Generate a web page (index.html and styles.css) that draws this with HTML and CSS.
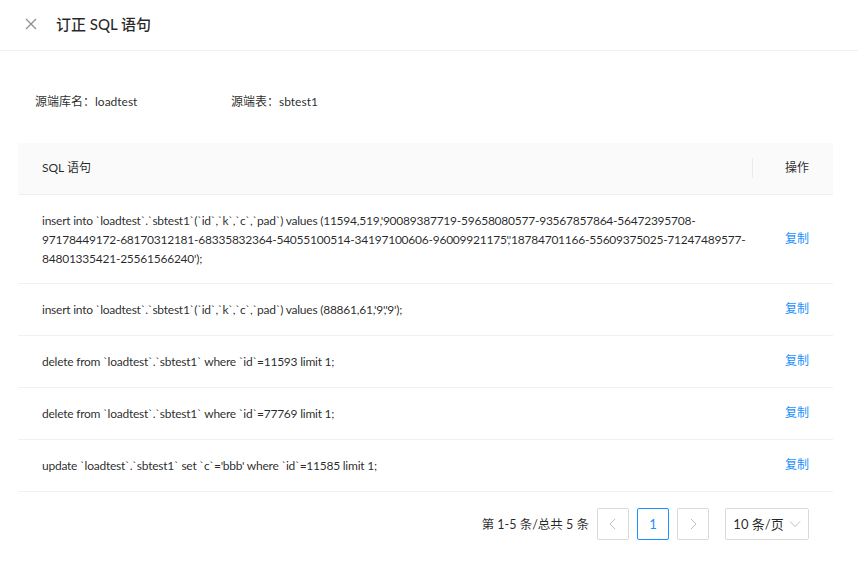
FILE: index.html
```html
<!DOCTYPE html>
<html>
<head>
  <meta charset="utf-8">
  <title>订正 SQL 语句</title>
  <link rel="stylesheet" href="styles.css">
</head>
<body>
  <div class="drawer">
    <div class="drawer-header">
      <span class="close-btn">
        <svg width="12" height="12" viewBox="0 0 12 12"><path d="M1 1L11 11M11 1L1 11" stroke="currentColor" stroke-width="1.2" fill="none"/></svg>
      </span>
      <span class="drawer-title">订正 SQL 语句</span>
    </div>

    <div class="drawer-body">
      <div class="info-line">
        <span class="info-item">源端库名：loadtest</span>
        <span class="info-item">源端表：sbtest1</span>
      </div>

      <table class="sql-table">
        <thead>
          <tr>
            <th class="col-sql">SQL 语句</th>
            <th class="col-op">操作</th>
          </tr>
        </thead>
        <tbody>
          <tr>
            <td class="col-sql">insert into `loadtest`.`sbtest1`(`id`,`k`,`c`,`pad`) values (11594,519,'90089387719-59658080577-93567857864-56472395708-97178449172-68170312181-68335832364-54055100514-34197100606-96009921175','18784701166-55609375025-71247489577-84801335421-25561566240');</td>
            <td class="col-op"><a href="#">复制</a></td>
          </tr>
          <tr>
            <td class="col-sql">insert into `loadtest`.`sbtest1`(`id`,`k`,`c`,`pad`) values (88861,61,'9','9');</td>
            <td class="col-op"><a href="#">复制</a></td>
          </tr>
          <tr>
            <td class="col-sql">delete from `loadtest`.`sbtest1` where `id`=11593 limit 1;</td>
            <td class="col-op"><a href="#">复制</a></td>
          </tr>
          <tr>
            <td class="col-sql">delete from `loadtest`.`sbtest1` where `id`=77769 limit 1;</td>
            <td class="col-op"><a href="#">复制</a></td>
          </tr>
          <tr>
            <td class="col-sql">update `loadtest`.`sbtest1` set `c`='bbb' where `id`=11585 limit 1;</td>
            <td class="col-op"><a href="#">复制</a></td>
          </tr>
        </tbody>
      </table>

      <ul class="pagination">
        <li class="total">第 1-5 条/总共 5 条</li>
        <li class="page-btn disabled">
          <svg width="10" height="12" viewBox="0 0 10 12"><path d="M7 1L2 6L7 11" stroke="currentColor" stroke-width="1" fill="none"/></svg>
        </li>
        <li class="page-btn active">1</li>
        <li class="page-btn disabled">
          <svg width="10" height="12" viewBox="0 0 10 12"><path d="M3 1L8 6L3 11" stroke="currentColor" stroke-width="1" fill="none"/></svg>
        </li>
        <li class="size-select">
          10 条/页
          <svg width="12" height="8" viewBox="0 0 12 8"><path d="M1 1.5L6 6.5L11 1.5" stroke="currentColor" stroke-width="1" fill="none"/></svg>
        </li>
      </ul>
    </div>
  </div>
</body>
</html>
```

FILE: styles.css
```css
:root {
  --text: rgba(0, 0, 0, 0.85);
  --muted: rgba(0, 0, 0, 0.45);
  --border: #f0f0f0;
  --primary: #1890ff;
}

* {
  box-sizing: border-box;
}

body {
  margin: 0;
  font-family: Lato, "Noto Sans CJK SC", sans-serif;
  color: var(--text);
  background: #fff;
  font-size: 12px;
}

.drawer-header {
  height: 51px;
  display: flex;
  align-items: center;
  border-bottom: 1px solid var(--border);
  padding-left: 25px;
  padding-bottom: 3px;
}

.close-btn {
  display: flex;
  color: var(--muted);
  margin-right: 19px;
}

.drawer-title {
  font-size: 15px;
  font-weight: 500;
}

.drawer-body {
  padding: 0 25px 0 18px;
}

.info-line {
  display: flex;
  padding: 42px 0 0 17px;
  height: 92px;
  line-height: 18px;
}

.info-item {
  width: 196px;
}

.sql-table {
  width: 100%;
  border-collapse: collapse;
  line-height: 1.5715;
}

.sql-table th,
.sql-table td {
  padding: 16px 24px;
  border-bottom: 1px solid var(--border);
  text-align: left;
  font-weight: normal;
}

.sql-table th {
  background: #fafafa;
  position: relative;
}

.sql-table th.col-sql::after {
  content: "";
  position: absolute;
  right: 0;
  top: 50%;
  height: 20px;
  margin-top: -10px;
  width: 1px;
  background: rgba(0, 0, 0, 0.06);
}

.sql-table .col-op {
  width: 80px;
  text-align: right;
}

.sql-table td.col-sql {
  overflow-wrap: anywhere;
  letter-spacing: -0.24px;
  padding: 17px 0 15px 24px;
}

.sql-table a {
  color: var(--primary);
  text-decoration: none;
}

.pagination {
  list-style: none;
  margin: 16px 0 0;
  padding: 0 24px 0 0;
  display: flex;
  justify-content: flex-end;
  align-items: center;
}

.pagination li {
  height: 32px;
  display: flex;
  align-items: center;
  justify-content: center;
}

.total {
  margin-right: 8px;
  font-size: 12.5px;
}

.page-btn {
  width: 32px;
  border: 1px solid #d9d9d9;
  border-radius: 2px;
  margin-right: 8px;
  font-size: 13px;
}

.page-btn.disabled {
  color: rgba(0, 0, 0, 0.25);
}

.page-btn.active {
  border-color: var(--primary);
  color: var(--primary);
}

.size-select {
  width: 84px;
  margin-left: 8px;
  border: 1px solid #d9d9d9;
  border-radius: 2px;
  gap: 5px;
  font-size: 13px;
}

.size-select svg {
  color: rgba(0, 0, 0, 0.25);
}
```
